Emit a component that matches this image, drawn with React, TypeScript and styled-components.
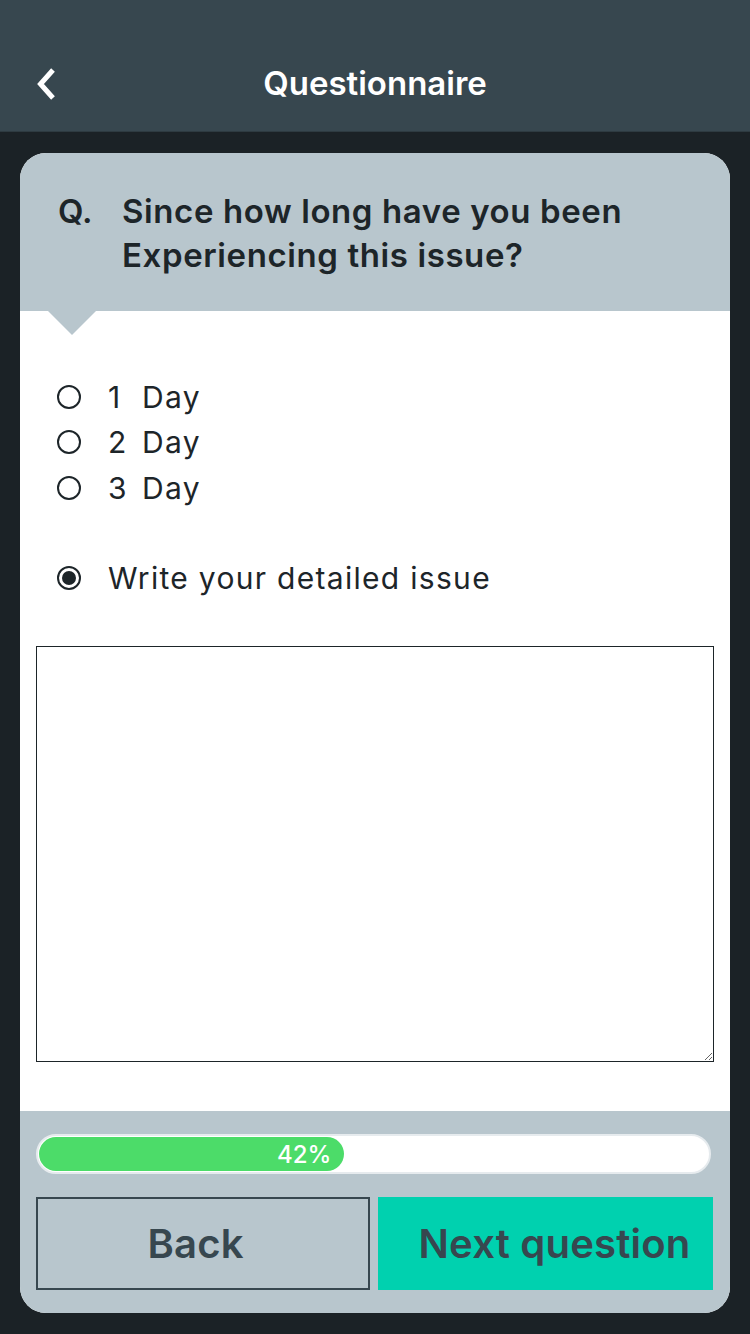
import React from 'react';
import styled, { createGlobalStyle } from 'styled-components';

const GlobalStyle = createGlobalStyle`
  html, body {
    margin: 0;
    padding: 0;
    background: #1b2226;
  }
  * {
    box-sizing: border-box;
  }
`;

const Screen = styled.div`
  width: 750px;
  height: 1334px;
  background: #1b2226;
  display: flex;
  flex-direction: column;
  font-family: Inter, 'Noto Sans', sans-serif;
`;

const TopBar = styled.header`
  height: 132px;
  background: #37474f;
  border-bottom: 1px solid #2e3b41;
  display: flex;
  align-items: flex-end;
  justify-content: center;
  padding-bottom: 26px;
  position: relative;
`;

const BackIcon = styled.button`
  position: absolute;
  left: 32px;
  bottom: 25px;
  width: 26px;
  height: 44px;
  padding: 0;
  border: none;
  background: none;
  display: flex;
  align-items: center;
  justify-content: center;
`;

const Title = styled.h1`
  margin: 0;
  color: #ffffff;
  font-size: 33px;
  font-weight: 600;
  line-height: 44px;
`;

const Card = styled.main`
  margin: 21px 20px 0;
  height: 1160px;
  border-radius: 26px;
  overflow: hidden;
  background: #ffffff;
  display: flex;
  flex-direction: column;
`;

const QuestionHead = styled.div`
  height: 158px;
  background: #b8c6cd;
  display: flex;
  padding: 36px 20px 0 38px;
  position: relative;

  &::after {
    content: '';
    position: absolute;
    left: 28px;
    bottom: -24px;
    border-left: 24px solid transparent;
    border-right: 24px solid transparent;
    border-top: 24px solid #b8c6cd;
  }
`;

const QMark = styled.span`
  width: 64px;
  flex: none;
  font-size: 33px;
  font-weight: 600;
  line-height: 44px;
  color: #1d2529;
`;

const QuestionText = styled.p`
  margin: 0;
  font-size: 33px;
  font-weight: 600;
  line-height: 44px;
  color: #1d2529;
  letter-spacing: 0.6px;
`;

const Body = styled.section`
  flex: 1;
  padding: 63px 16px 0 16px;
  display: flex;
  flex-direction: column;
`;

const Options = styled.div`
  display: flex;
  flex-direction: column;
  padding-left: 21px;
`;

const Option = styled.label<{ $gapTop?: number }>`
  display: flex;
  align-items: center;
  height: 45.5px;
  margin-top: ${(p) => p.$gapTop ?? 0}px;
  font-size: 30px;
  color: #1d2529;
  letter-spacing: 1.3px;
`;

const Radio = styled.span<{ $checked?: boolean }>`
  width: 24px;
  height: 24px;
  border-radius: 50%;
  border: 2px solid #1d2529;
  margin-right: 27px;
  flex: none;
  display: flex;
  align-items: center;
  justify-content: center;

  &::after {
    content: '';
    width: 14px;
    height: 14px;
    border-radius: 50%;
    background: #1d2529;
    display: ${(p) => (p.$checked ? 'block' : 'none')};
  }
`;

const Num = styled.span`
  width: 34px;
`;

const TextArea = styled.textarea`
  margin-top: 45px;
  width: 678px;
  height: 416px;
  border: 1px solid #1d2529;
  border-radius: 0;
  resize: both;
  font-family: Inter, sans-serif;
  font-size: 24px;
  outline: none;
`;

const Footer = styled.footer`
  height: 202px;
  background: #b8c6cd;
  padding: 23px 17px 0 16px;
  display: flex;
  flex-direction: column;
`;

const Progress = styled.div`
  height: 40px;
  width: 675px;
  border-radius: 20px;
  background: #ffffff;
  border: 2px solid #e6ebee;
  padding: 1px;
  display: flex;
`;

const Fill = styled.div`
  height: 34px;
  border-radius: 17px;
  background: #4cdc69;
  color: #ffffff;
  font-size: 24px;
  font-weight: 500;
  display: flex;
  align-items: center;
  justify-content: flex-end;
  padding-right: 13px;
`;

const Buttons = styled.div`
  margin-top: 23px;
  display: flex;
  gap: 8px;
`;

const Button = styled.button<{ $primary?: boolean }>`
  width: ${(p) => (p.$primary ? 335 : 334)}px;
  height: 93px;
  font-family: Inter, sans-serif;
  font-size: 40px;
  font-weight: 600;
  color: #37474f;
  background: ${(p) => (p.$primary ? '#00d1af' : '#b8c6cd')};
  border: ${(p) => (p.$primary ? 'none' : '2px solid #37474f')};
  border-radius: 0;
  padding: ${(p) => (p.$primary ? '0 0 0 18px' : '0 15px 0 0')};
  letter-spacing: 0.2px;
`;

const options = ['1', '2', '3'];

export default function App() {
  const percent = 42;
  return (
    <>
      <GlobalStyle />
      <Screen>
        <TopBar>
          <BackIcon aria-label="back">
            <svg width="24" height="34" viewBox="0 0 24 34">
              <path d="M20 3 L7.5 17 L20 31" fill="none" stroke="#ffffff" strokeWidth="5" />
            </svg>
          </BackIcon>
          <Title>Questionnaire</Title>
        </TopBar>
        <Card>
          <QuestionHead>
            <QMark>Q.</QMark>
            <QuestionText>
              Since how long have you been
              <br />
              Experiencing this issue?
            </QuestionText>
          </QuestionHead>
          <Body>
            <Options>
              {options.map((n) => (
                <Option key={n}>
                  <Radio />
                  <Num>{n}</Num>
                  Day
                </Option>
              ))}
              <Option $gapTop={45}>
                <Radio $checked />
                Write your detailed issue
              </Option>
            </Options>
            <TextArea />
          </Body>
          <Footer>
            <Progress>
              <Fill style={{ width: `${(percent / 100) * 727}px` }}>{percent}%</Fill>
            </Progress>
            <Buttons>
              <Button>Back</Button>
              <Button $primary>Next question</Button>
            </Buttons>
          </Footer>
        </Card>
      </Screen>
    </>
  );
}
